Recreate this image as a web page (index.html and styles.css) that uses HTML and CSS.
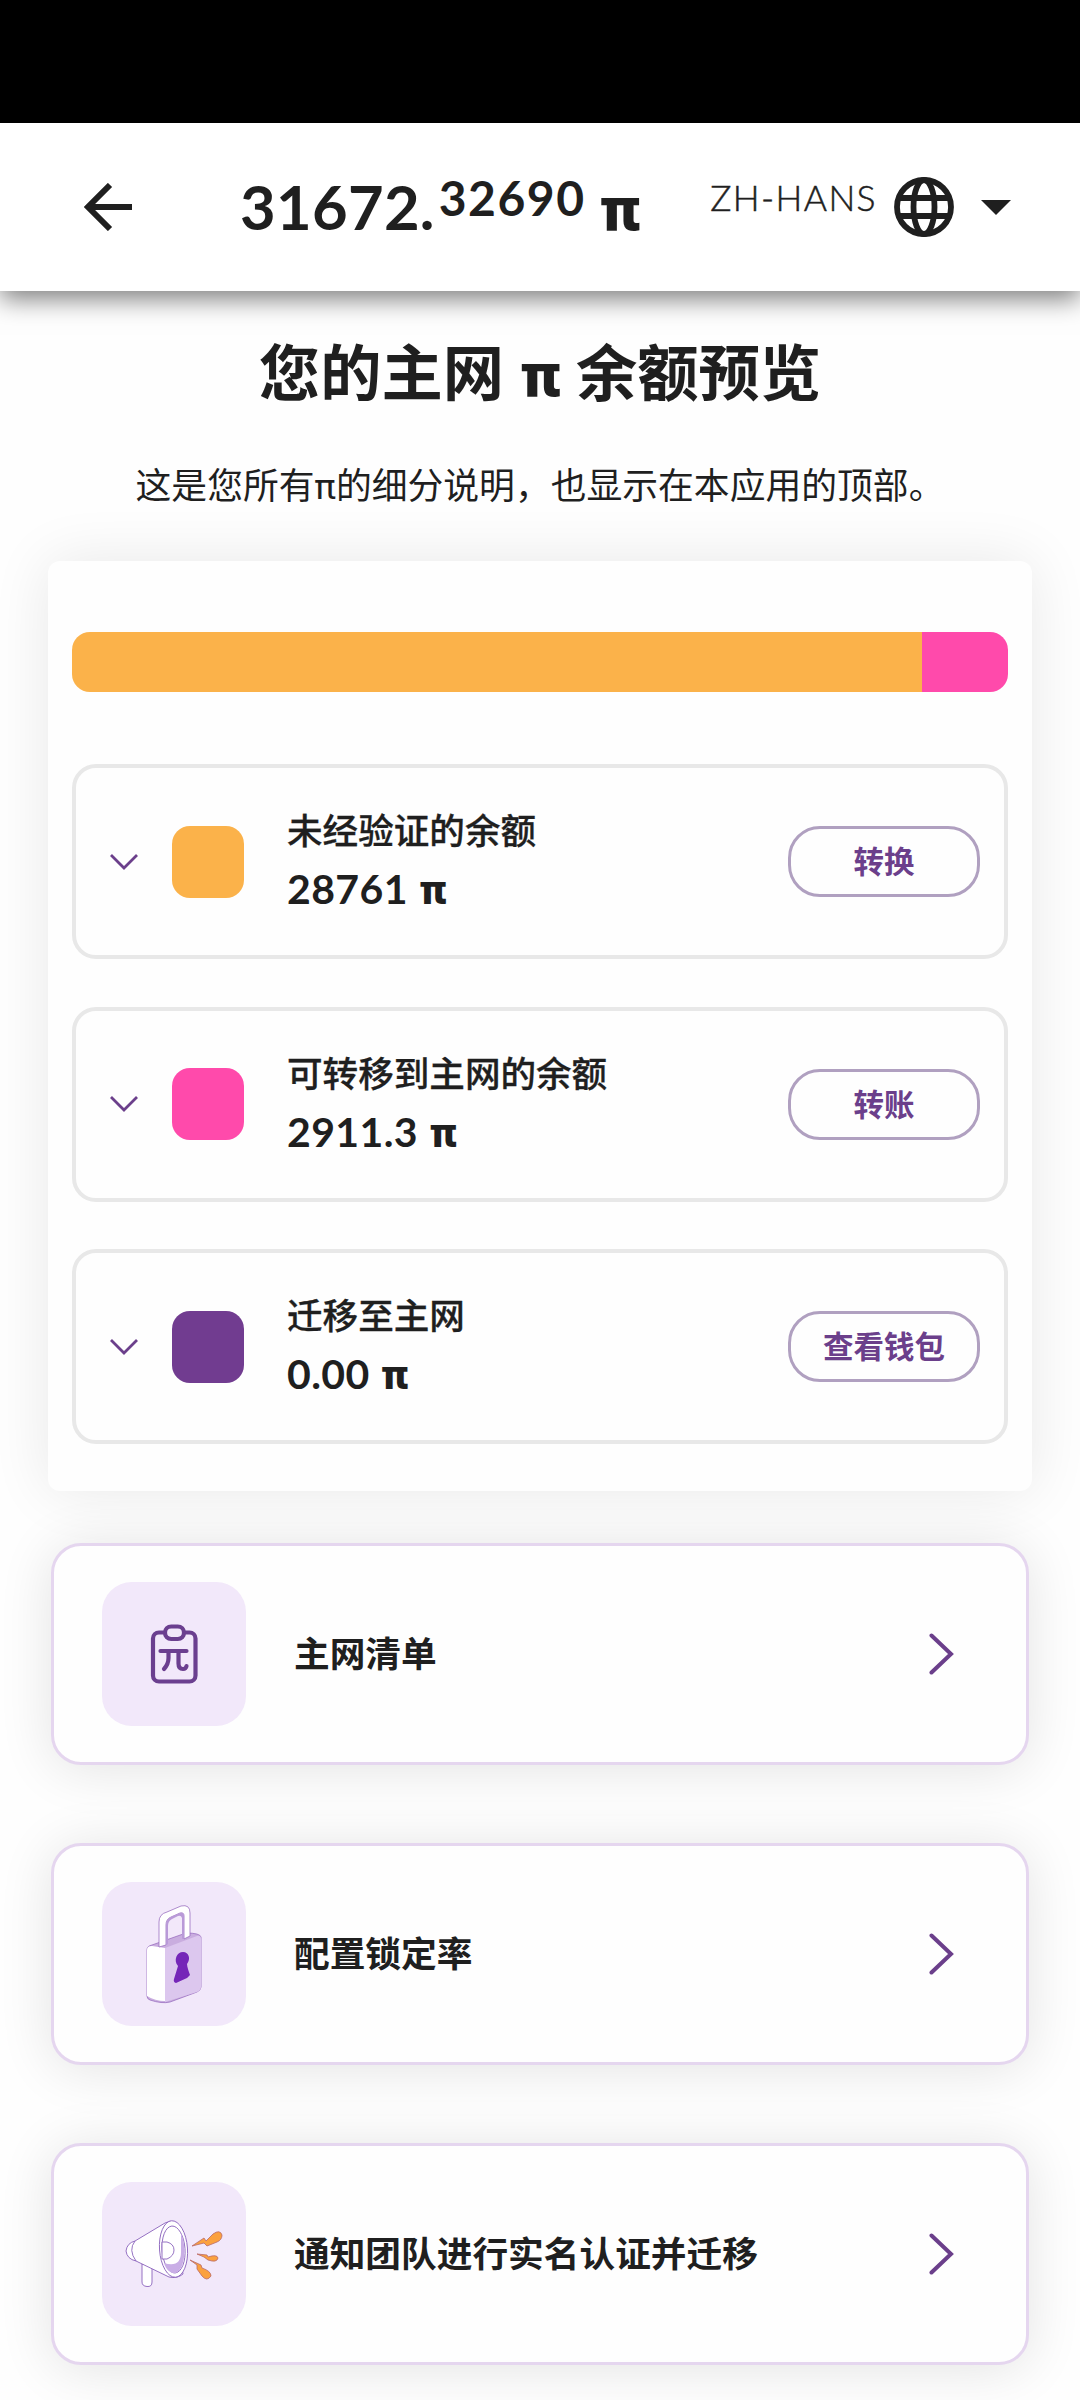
FILE: index.html
```html
<!DOCTYPE html>
<html lang="zh-Hans">
<head>
<meta charset="utf-8">
<title>主网余额</title>
<link rel="stylesheet" href="styles.css">
</head>
<body>
<div class="status-bar"></div>
<header class="header">
  <svg class="back" viewBox="0 0 48 48"><path d="M48 24H5M26 2L4 24l22 22" fill="none" stroke="#1f1f1f" stroke-width="6"/></svg>
  <div class="total"><span class="whole">31672.</span><span class="fraction">32690</span><span class="pi">π</span></div>
  <div class="language">
    <span class="code">ZH-HANS</span>
    <svg class="globe" viewBox="0 0 60 60" fill="none" stroke="#1f1f1f" stroke-width="5.8"><circle cx="30" cy="30" r="27"/><ellipse cx="30" cy="30" rx="10.5" ry="27"/><path d="M5 21h50M5 39h50"/></svg>
    <svg class="caret" viewBox="0 0 30 15"><path d="M0 0h30L15 15z" fill="#1f1f1f"/></svg>
  </div>
</header>
<main class="content">
  <h1 class="title">您的主网 <span class="title-pi">π</span> 余额预览</h1>
  <p class="subtitle">这是您所有<span class="text-pi">π</span>的细分说明，也显示在本应用的顶部。</p>

  <section class="balances">
    <div class="bar"><div class="bar-pending" style="width: 90.8%"></div><div class="bar-ready"></div></div>
    <div class="balance">
      <svg class="expand" viewBox="0 0 28 16"><path d="M1 1l13 13L27 1" fill="none" stroke="#6b3f8b" stroke-width="2.8"/></svg>
      <div class="swatch orange"></div>
      <div class="info"><div class="label">未经验证的余额</div><div class="value">28761 <b>π</b></div></div>
      <button class="action">转换</button>
    </div>
    <div class="balance">
      <svg class="expand" viewBox="0 0 28 16"><path d="M1 1l13 13L27 1" fill="none" stroke="#6b3f8b" stroke-width="2.8"/></svg>
      <div class="swatch pink"></div>
      <div class="info"><div class="label">可转移到主网的余额</div><div class="value">2911.3 <b>π</b></div></div>
      <button class="action">转账</button>
    </div>
    <div class="balance">
      <svg class="expand" viewBox="0 0 28 16"><path d="M1 1l13 13L27 1" fill="none" stroke="#6b3f8b" stroke-width="2.8"/></svg>
      <div class="swatch purple"></div>
      <div class="info"><div class="label">迁移至主网</div><div class="value">0.00 <b>π</b></div></div>
      <button class="action">查看钱包</button>
    </div>
  </section>

  <nav class="menu">
    <a class="menu-item">
      <svg class="tile" viewBox="0 0 144 144" fill="none" stroke="#6b3f8f" stroke-width="4.2" stroke-linecap="round" stroke-linejoin="round">
        <path d="M62 50.500h-5a6 6 0 0 0-6 6V93.500a6 6 0 0 0 6 6h30.500a6 6 0 0 0 6-6V56.500a6 6 0 0 0-6-6h-5"/>
        <rect x="63" y="44.500" width="19" height="12.500" rx="6.200"/>
        <path d="M58.500 69h26M66.500 69v7q0 6-4.500 11M76.500 69v12.500q0 5.500 4.500 5.500q3 0 3.500-3"/>
      </svg>
      <span class="menu-label">主网清单</span>
      <svg class="go" viewBox="0 0 25 42"><path d="M2.500 2.500l19.500 18.500L2.500 39.500" fill="none" stroke="#6b3f8b" stroke-width="4" stroke-linecap="round"/></svg>
    </a>
    <a class="menu-item">
      <svg class="tile" viewBox="0 0 144 144" stroke="#9a70c0" stroke-width="0.8" stroke-linejoin="round">
        <path d="M45 68q0-4 5-5l34-12q14 0 15 4v50q0 3-4 5l-27 10q-8 2-20-2-3-1-3-4z" fill="#c9addf"/>
        <path d="M45 68q0-4 5-4l13 2v53q-10 0-18-5z" fill="#fff" stroke="none"/>
        <path d="M63 66l32-12q4-1 4 3v48q0 3-4 5l-32 10z" fill="#dcc7ee" stroke="none"/>
        <path d="M57 65V40q0-8 8-10l14-6q9-2 9 7v23l-6 3V34q0-4-4-3l-9 4q-5 2-5 8v20z" fill="#fff"/>
        <path d="M64 63V43q0-6 5-8l9-4q4-1 4 3v22l-2 1V36q-1-3-4-2l-6 3q-4 2-4 7v18z" fill="#b99ad8" stroke="none"/>
        <path d="M76 84c-5-6-1-14 5-14 6 0 8 7 4 12 0 3 2 8 3 11l-3 3-11 5q-3-1-2-4z" fill="#7526b8" stroke="none"/>
      </svg>
      <span class="menu-label">配置锁定率</span>
      <svg class="go" viewBox="0 0 25 42"><path d="M2.500 2.500l19.500 18.500L2.500 39.500" fill="none" stroke="#6b3f8b" stroke-width="4" stroke-linecap="round"/></svg>
    </a>
    <a class="menu-item">
      <svg class="tile" viewBox="0 0 144 144" fill="#fff" stroke="#8a62bc" stroke-width="0.9" stroke-linejoin="round">
        <path d="M40 82v18q0 4 5 4.500t5-4.500V84z"/>
        <path d="M33 59l30-18q5-3 10-1l8 52q-6 5-14 3L34 79q-9-2-10-10 1-8 9-10z"/>
        <path d="M33 59q-7 9 1 20" fill="none"/>
        <ellipse cx="71.500" cy="67" rx="14" ry="28.300" transform="rotate(-4 71.500 67)"/>
        <ellipse cx="71.500" cy="67.500" rx="11.500" ry="23.500" transform="rotate(-4 71.500 67)" fill="#fff"/>
        <path d="M79 51c6 14 4 36-5 40-5 1-10-3-12-10q17 5 17-11z" fill="#c9aee6" stroke="none"/>
        <path d="M60 60h5q7 2 7 8t-7 9h-5z"/>
        <g fill="#fba13e" stroke="#b96a68" stroke-width="0.8"><path d="M90 64l12-8 2 3 7-7q7-5 9 1 0 5-5 7l-10 4-3-3z"/><path d="M95 72l10 1 1 2q9-3 10 1-1 5-10 2l-4-3z"/><path d="M88 78l11 5 1 3q9 3 9 8-4 6-9 0l-5-7 0-4z"/></g>
      </svg>
      <span class="menu-label">通知团队进行实名认证并迁移</span>
      <svg class="go" viewBox="0 0 25 42"><path d="M2.500 2.500l19.500 18.500L2.500 39.500" fill="none" stroke="#6b3f8b" stroke-width="4" stroke-linecap="round"/></svg>
    </a>
  </nav>
</main>
</body>
</html>
```
FILE: styles.css
```css
* { box-sizing: border-box; }
body {
  margin: 0;
  height: 2400px;
  overflow: hidden;
  background: #fefefe;
  color: #1f1f1f;
  font-family: "Noto Sans CJK SC", sans-serif;
}
.status-bar { height: 123px; background: #000; }
.header {
  height: 168px;
  padding: 0 69px 0 84px;
  display: flex;
  align-items: center;
  background: #fff;
  box-shadow: 0 8px 24px rgba(0, 0, 0, .5);
  clip-path: inset(0 0 -60px 0);
}
.back { width: 48px; height: 48px; }
.total {
  display: flex;
  align-items: baseline;
  width: 400px;
  height: 84px;
  margin-left: 108px;
  font-family: Lato, sans-serif;
  font-weight: 700;
  font-size: 61.500px;
  line-height: 82px;
  white-space: nowrap;
}
.whole { letter-spacing: .3px; }
.fraction { font-size: 48px; line-height: 50px; transform: translateY(-14px); margin-left: 4px; letter-spacing: 1.5px; }
.pi { font-family: Roboto, sans-serif; font-weight: 900; margin-left: 14px; line-height: 50px; }
.language { margin-left: auto; display: flex; align-items: center; }
.code {
  padding-bottom: 18px;
  font-family: Lato, sans-serif;
  font-size: 35.500px;
  font-weight: 300;
  line-height: 40px;
  letter-spacing: 1.400px;
  -webkit-text-stroke: .5px #1f1f1f;
}
.globe { width: 60px; height: 62px; margin-left: 17px; }
.caret { width: 30px; height: 15px; margin-left: 27px; }
.content { padding: 0 48px; }
.title { margin: 39px 0 0; height: 80px; text-align: center; font-size: 61.300px; line-height: 80px; font-weight: 700; }
.title-pi { font-family: Roboto, sans-serif; font-weight: 900; line-height: 1; margin: 0 1px 0 2px; }
.subtitle { margin: 48px 0 0; height: 50px; text-align: center; font-size: 35.800px; line-height: 50px; }
.text-pi { font-family: Roboto, sans-serif; line-height: 1; }
.balances {
  margin-top: 53px;
  height: 930px;
  padding: 71px 24px 0;
  border-radius: 12px;
  background: #fefefe;
  box-shadow: 0 0 60px rgba(0, 0, 0, .09);
}
.bar { height: 60px; display: flex; overflow: hidden; border-radius: 18px; margin-bottom: 72px; }
.bar-pending { background: #fbb24a; }
.bar-ready { flex: 1; background: #ff4aab; }
.balance {
  height: 195px;
  margin-bottom: 47.500px;
  padding: 0 24px 0 34px;
  display: flex;
  align-items: center;
  border: 4px solid #e8e8e8;
  border-radius: 24px;
}
.expand { width: 28px; height: 16px; margin-right: 34px; }
.swatch { width: 72px; height: 72px; border-radius: 18px; }
.orange { background: #fbb24a; }
.pink { background: #ff4aab; }
.purple { background: #713c90; }
.info { margin-left: 43px; flex: 1; padding-bottom: 4px; }
.label { margin-bottom: 4px; font-size: 35.600px; line-height: 54px; font-weight: 500; -webkit-text-stroke: .3px #1f1f1f; }
.value { font-family: Lato, sans-serif; font-size: 41px; line-height: 57px; font-weight: 700; letter-spacing: .4px; }
.value b { font-family: Roboto, sans-serif; font-weight: 900; margin-left: 1px; line-height: 1; }
.action {
  width: 192px;
  height: 71px;
  padding: 0 0 3px;
  border: 3px solid #b0a0c0;
  border-radius: 32px;
  background: transparent;
  color: #6b3f8b;
  font: 700 30.500px "Noto Sans CJK SC", sans-serif;
}
.menu { margin-top: 52px; padding: 0 3px; display: flex; flex-direction: column; gap: 78px; }
.menu-item {
  height: 222px;
  padding: 0 72px 0 48px;
  display: flex;
  align-items: center;
  border: 3px solid #e5d6ef;
  border-radius: 30px;
  background: #fefefe;
  box-shadow: 0 4px 54px rgba(0, 0, 0, .11);
}
.tile { width: 144px; height: 144px; border-radius: 30px; background: #f2e8fa; }
.menu-label { flex: 1; margin-left: 48px; padding-bottom: 5px; font-size: 35.700px; font-weight: 700; }
.go { width: 25px; height: 42px; }
```
